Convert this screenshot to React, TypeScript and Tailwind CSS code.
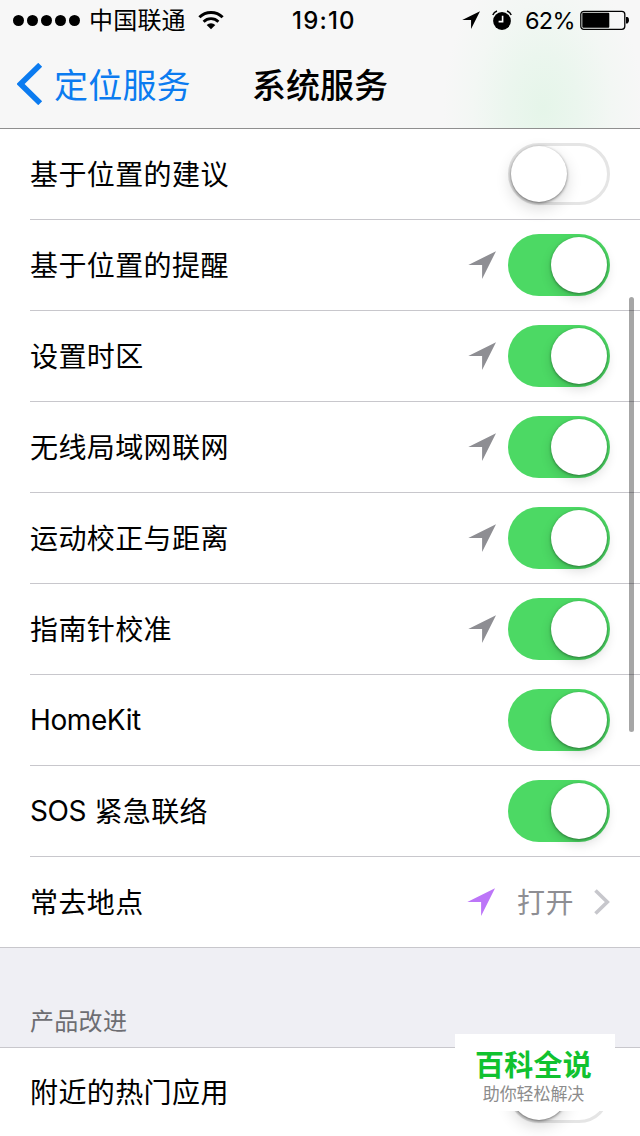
import React from "react";

type Row = { label: string; arrow?: boolean; on: boolean };

const rows: Row[] = [
  { label: "基于位置的建议", on: false },
  { label: "基于位置的提醒", arrow: true, on: true },
  { label: "设置时区", arrow: true, on: true },
  { label: "无线局域网联网", arrow: true, on: true },
  { label: "运动校正与距离", arrow: true, on: true },
  { label: "指南针校准", arrow: true, on: true },
  { label: "HomeKit", on: true },
  { label: "SOS 紧急联络", on: true },
];

function Arrow({ className }: { className: string }) {
  return (
    <svg viewBox="0 0 28 28" className={className} fill="currentColor">
      <path d="M0.3 13.9 28 0.2 14.1 27.9V13.9Z" />
    </svg>
  );
}

function Label({ text }: { text: string }) {
  const latin = text.match(/^[A-Za-z]+/)?.[0] ?? "";
  return (
    <span className="flex-1 pt-[2px]">
      {latin && <span className="align-[1px] text-[28px] leading-none tracking-[-0.4px]">{latin}</span>}
      {text.slice(latin.length)}
    </span>
  );
}

function Toggle({ on }: { on: boolean }) {
  return on ? (
    <div className="flex h-[62px] w-[102px] shrink-0 items-center justify-end rounded-full bg-[#4cd964] pr-[3px]">
      <div className="size-[56px] rounded-full bg-white shadow-[0_5px_12px_rgba(0,0,0,0.14),0_1px_3px_rgba(0,0,0,0.4)]" />
    </div>
  ) : (
    <div className="flex h-[62px] w-[102px] shrink-0 items-center rounded-full border-[3px] border-[#e5e5e5] bg-white">
      <div className="size-[56px] rounded-full bg-white shadow-[0_6px_16px_rgba(0,0,0,0.16),0_1px_3px_rgba(0,0,0,0.5)]" />
    </div>
  );
}

function StatusBar() {
  return (
    <div className="flex h-10 items-center text-[24px] leading-10 text-black">
      <div className="ml-[13px] flex w-[68px] gap-[3px]">
        {[0, 1, 2, 3, 4].map((i) => (
          <span key={i} className="size-[11px] shrink-0 rounded-full bg-black" />
        ))}
      </div>
      <span className="ml-2 w-[97px] whitespace-nowrap pt-[2px] tracking-[0.2px]">中国联通</span>
      <svg viewBox="0 0 26 20" className="ml-[12px] h-5 w-[26px]" fill="none" stroke="black">
        <path d="M1.4 7.2A16.4 16.4 0 0 1 24.6 7.2" strokeWidth="3" />
        <path d="M5.6 11.7A10.5 10.5 0 0 1 20.4 11.7" strokeWidth="2.8" />
        <path d="M13 19.2 8.7 14.9A6.2 6.2 0 0 1 17.3 14.9Z" fill="black" stroke="none" />
      </svg>
      <span className="ml-[68px] w-[64px] whitespace-nowrap pt-[2px] font-medium tracking-[1.2px]">19:10</span>
      <Arrow className="ml-[106px] size-[18px]" />
      <svg viewBox="0 0 20 20" className="ml-[12px] size-5" fill="none" stroke="black">
        <circle cx="10" cy="11" r="8.9" fill="black" stroke="none" />
        <path d="M0.8 5A7 7 0 0 1 5 1M15 1A7 7 0 0 1 19.2 5" strokeWidth="1.5" />
        <path d="M10.6 5.8V11.6H6.6" stroke="white" strokeWidth="1.6" />
      </svg>
      <span className="ml-[13px] w-[50px] whitespace-nowrap pt-[2px] text-[23.5px] tracking-[-0.7px]">62%</span>
      <svg viewBox="0 0 50 20" className="ml-[5px] h-5 w-[50px]">
        <rect x="0.8" y="1.3" width="44" height="18" rx="3" fill="none" stroke="black" strokeWidth="1.3" />
        <rect x="2.3" y="2.8" width="27" height="15" rx="1" fill="black" />
        <path d="M46 7H47.5Q49 7.5 49 10.3T47.5 13.5H46Z" fill="black" />
      </svg>
    </div>
  );
}

export default function App() {
  return (
    <div className="relative flex h-[1136px] w-[640px] flex-col overflow-hidden bg-white font-['Inter','Noto_Sans_CJK_SC',sans-serif] text-black">
      <header className="flex h-[129px] shrink-0 flex-col border-b border-[#8f8f8f] bg-[#f7f7f7] bg-[radial-gradient(ellipse_100px_150px_at_543px_108px,#e5f5e9_0%,#ebf6ee_35%,#f3f7f4_70%,#f7f7f7_100%)]">
        <StatusBar />
        <nav className="flex h-[88px] items-center">
          <svg viewBox="0 0 26 42" className="ml-[17px] h-[42px] w-[26px] text-[#0b7bf0]" fill="none" stroke="currentColor">
            <path d="M23.2 1.8 3.6 21 23.2 40.2" strokeWidth="5.6" />
          </svg>
          <span className="ml-[11px] w-[198px] whitespace-nowrap pt-[3px] text-[34px] leading-[48px] tracking-[0.2px] text-[#0b7bf0]">定位服务</span>
          <h1 className="whitespace-nowrap pt-[3px] text-[34px] font-medium leading-[48px]">系统服务</h1>
        </nav>
      </header>

      <main className="flex flex-col text-[28px] leading-10 tracking-[0.4px]">
        {rows.map((r) => (
          <div key={r.label} className="ml-[30px] flex h-[91px] items-center border-b border-[#c8c7cc] pr-[30px]">
            <Label text={r.label} />
            {r.arrow && <Arrow className="mr-3 size-7 text-[#8e8e93]" />}
            <Toggle on={r.on} />
          </div>
        ))}
        <div className="flex h-[91px] items-center border-b border-[#c8c7cc] pl-[30px] pr-[30px]">
          <Label text="常去地点" />
          <Arrow className="mr-[22px] size-7 text-[#bc75f8]" />
          <span className="w-[57px] whitespace-nowrap pt-[2px] text-[#8e8e93]">打开</span>
          <svg viewBox="0 0 16 26" className="ml-5 h-[26px] w-4" fill="none" stroke="#c7c7cc">
            <path d="M1.5 1.5 13.3 13 1.5 24.5" strokeWidth="3.6" />
          </svg>
        </div>
        <div className="flex h-[100px] items-end border-b border-[#c8c7cc] bg-[#efeff4] pb-[7px] pl-[30px] text-[24px] leading-9 tracking-[0.3px] text-[#6d6d72]">
          产品改进
        </div>
        <div className="flex h-[88px] items-center px-[30px]">
          <Label text="附近的热门应用" />
          <Toggle on={false} />
        </div>
      </main>

      <div className="absolute left-[629px] top-[297px] h-[435px] w-[5px] rounded-full bg-black/35" />

      <div className="absolute left-[455px] top-[1034px] flex h-[77px] w-[160px] flex-col items-center bg-white pr-[3px] pt-[14px]">
        <span className="text-[29px] font-bold leading-9 tracking-[0.2px] text-[#10c22f]">百科全说</span>
        <span className="text-[17px] leading-5 tracking-[-0.1px] text-[#8c8c8c]">助你轻松解决</span>
      </div>
    </div>
  );
}
